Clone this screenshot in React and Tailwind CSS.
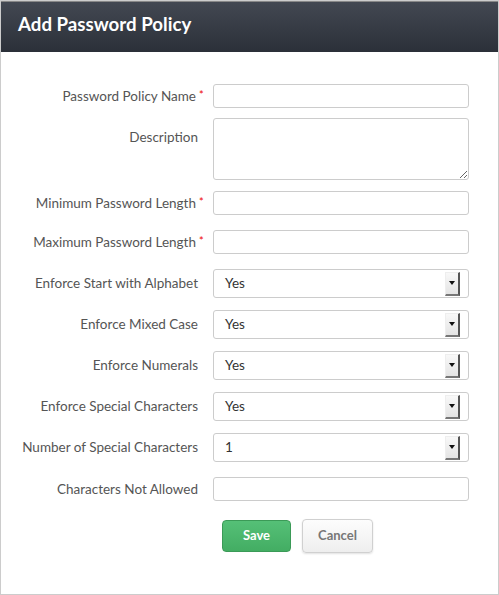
import React from "react";

const font = { fontFamily: '"Lato", "Open Sans", sans-serif' };

function Label({ children, required, top }) {
  return (
    <div
      className={`w-[202px] shrink-0 flex justify-end text-[13.5px] text-[#555] ${
        top ? "pt-[9px]" : ""
      } ${required ? "" : "pr-[5px]"}`}
    >
      <span>{children}</span>
      {required && (
        <span className="text-[#e00] text-[11px] leading-none ml-[3px] mt-[3px] w-[4px]">
          *
        </span>
      )}
    </div>
  );
}

function TextInput() {
  return (
    <input
      type="text"
      className="w-[256px] h-[24px] border border-[#ccc] rounded-[3px] bg-white outline-none px-2 text-[13px]"
    />
  );
}

function SelectBox({ value }) {
  return (
    <div className="w-[256px] h-[29px] border border-[#ccc] rounded-[3px] bg-white flex items-center justify-between pl-[11px] pr-[8px]">
      <span className="text-[13.5px] text-[#333]">{value}</span>
      <span className="w-[15px] h-[24px] bg-gradient-to-b from-[#f8f8f8] to-[#e4e4e4] border-r-2 border-b-2 border-r-[#555] border-b-[#777] border-l border-t border-l-[#eee] border-t-[#eee] flex items-center justify-center">
        <svg width="6" height="4" viewBox="0 0 6 4">
          <path d="M0 0 L6 0 L3 4 Z" fill="#111" />
        </svg>
      </span>
    </div>
  );
}

const rows = [
  { label: "Enforce Start with Alphabet", value: "Yes" },
  { label: "Enforce Mixed Case", value: "Yes" },
  { label: "Enforce Numerals", value: "Yes" },
  { label: "Enforce Special Characters", value: "Yes" },
  { label: "Number of Special Characters", value: "1" },
];

export default function App() {
  return (
    <div
      className="w-[499px] h-[595px] bg-white border border-[#ccc] flex flex-col"
      style={font}
    >
      {/* Header */}
      <div className="h-[51px] shrink-0 bg-gradient-to-b from-[#434852] to-[#2b3039] border-t border-t-[#888] flex items-center pl-[17px] pb-[5px]">
        <h1 className="text-white font-bold text-[18.7px]">
          Add Password Policy
        </h1>
      </div>

      {/* Form */}
      <div className="flex flex-col pt-[32px]">
        <div className="flex items-center gap-[10px]">
          <Label required>Password Policy Name</Label>
          <TextInput />
        </div>

        <div className="flex items-start gap-[10px] mt-[10px]">
          <Label top>Description</Label>
          <textarea className="w-[256px] h-[62px] border border-[#ccc] rounded-[3px] outline-none px-2 text-[13px]" />
        </div>

        <div className="flex items-center gap-[10px] mt-[11px]">
          <Label required>Minimum Password Length</Label>
          <TextInput />
        </div>

        <div className="flex items-center gap-[10px] mt-[15px]">
          <Label required>Maximum Password Length</Label>
          <TextInput />
        </div>

        {rows.map((r, i) => (
          <div
            key={r.label}
            className={`flex items-center gap-[10px] ${i === 0 ? "mt-[15px]" : "mt-[12px]"}`}
          >
            <Label>{r.label}</Label>
            <SelectBox value={r.value} />
          </div>
        ))}

        <div className="flex items-center gap-[10px] mt-[15px]">
          <Label>Characters Not Allowed</Label>
          <TextInput />
        </div>

        <div className="flex items-center gap-[11px] mt-[18px] pl-[221px]">
          <button className="w-[69px] h-[32px] rounded-[4px] border border-[#3b9a57] bg-gradient-to-b from-[#55c077] to-[#43ad63] text-white font-bold text-[13px]">
            Save
          </button>
          <button className="w-[71px] h-[34px] rounded-[4px] border border-[#d0d0d0] bg-gradient-to-b from-[#fdfdfd] to-[#eeeeee] shadow-[0_1px_2px_rgba(0,0,0,0.12)] text-[#777] font-bold text-[13px]">
            Cancel
          </button>
        </div>
      </div>
    </div>
  );
}
